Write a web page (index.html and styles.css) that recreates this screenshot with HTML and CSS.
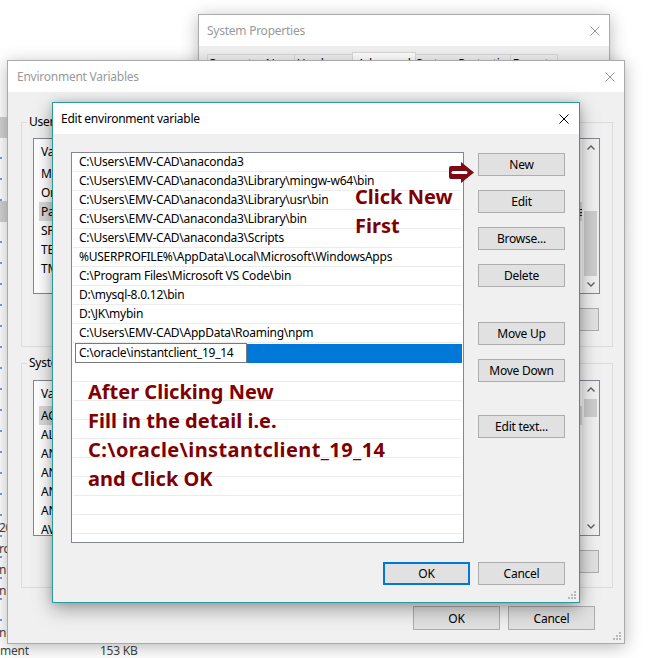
FILE: index.html
```html
<!DOCTYPE html>
<html>
<head>
<meta charset="utf-8">
<link rel="stylesheet" href="styles.css">
</head>
<body>
<div class="desk">

  <div class="explorer">
    <div class="ex-main">
      <div class="ex-pane">
        <div class="ex-sel s1"></div>
        <div class="ex-sel s2"></div>
        <div class="ex-frags">
          <div>20</div><div>rc</div><div>n</div><div>n</div><div></div><div>n</div>
        </div>
      </div>
    </div>
    <div class="ex-status"><span class="st-name">ment</span><span class="st-size">153 KB</span></div>
  </div>

  <div class="win inactive sysprops">
    <div class="titlebar">
      <span class="title">System Properties</span>
      <svg class="close" width="10" height="10" viewBox="0 0 10 10"><path d="M0.5 0.5L9.5 9.5M9.5 0.5L0.5 9.5"/></svg>
    </div>
    <div class="body sp-body">
      <div class="tabs">
        <div class="tab t1">Computer Name</div>
        <div class="tab t2">Hardware</div>
        <div class="tab t3 active">Advanced</div>
        <div class="tab t4">System Protection</div>
        <div class="tab t5">Remote</div>
      </div>
    </div>
  </div>

  <div class="win inactive envvars">
    <div class="titlebar ev-title">
      <span class="title">Environment Variables</span>
      <svg class="close" width="10" height="10" viewBox="0 0 10 10"><path d="M0.5 0.5L9.5 9.5M9.5 0.5L0.5 9.5"/></svg>
    </div>
    <div class="body ev-body">
      <div class="group user">
        <span class="legend">User variables for EMV-CAD</span>
        <div class="lv">
          <div class="lv-content">
            <div class="lv-header"><span class="c1">Variable</span><span class="c2">Value</span></div>
            <div class="lv-row"><span class="c1">MOZ_PLUGIN_PATH</span><span class="c2">C:\Program Files (x86)\Foxit Software\plugins\</span></div>
            <div class="lv-row"><span class="c1">OneDrive</span><span class="c2">C:\Users\EMV-CAD\OneDrive</span></div>
            <div class="lv-row sel"><span class="c1">Path</span><span class="c2">C:\Users\EMV-CAD\anaconda3;C:\Users\EMV-CAD\anaconda3\Library</span></div>
            <div class="lv-row"><span class="c1">SPARK_HOME</span><span class="c2">D:\spark</span></div>
            <div class="lv-row"><span class="c1">TEMP</span><span class="c2">%USERPROFILE%\AppData\Local\Temp</span></div>
            <div class="lv-row"><span class="c1">TMP</span><span class="c2">%USERPROFILE%\AppData\Local\Temp</span></div>
          </div>
          <div class="vscroll">
            <div class="sb-arrow"><svg width="8" height="5" viewBox="0 0 8 5"><path d="M0.5 4.5L4 1L7.5 4.5"/></svg></div>
            <div class="track"><div class="thumb"></div></div>
            <div class="sb-arrow"><svg width="8" height="5" viewBox="0 0 8 5"><path d="M0.5 0.5L4 4L7.5 0.5"/></svg></div>
          </div>
        </div>
        <div class="btnrow">
          <button class="btn">New...</button><button class="btn">Edit...</button><button class="btn">Delete</button>
        </div>
      </div>

      <div class="group sys">
        <span class="legend">System variables</span>
        <div class="lv">
          <div class="lv-content">
            <div class="lv-header"><span class="c1">Variable</span><span class="c2">Value</span></div>
            <div class="lv-row sel"><span class="c1">ACSetupSvcPort</span><span class="c2">23210</span></div>
            <div class="lv-row"><span class="c1">ALLUSERSPROFILE</span><span class="c2">C:\ProgramData</span></div>
            <div class="lv-row"><span class="c1">ANDROID_HOME</span><span class="c2">C:\Android\sdk</span></div>
            <div class="lv-row"><span class="c1">ANDROID_NDK</span><span class="c2">C:\Android\ndk</span></div>
            <div class="lv-row"><span class="c1">ANT_HOME</span><span class="c2">D:\ant</span></div>
            <div class="lv-row"><span class="c1">ANT_OPTS</span><span class="c2">-Xmx512m</span></div>
            <div class="lv-row"><span class="c1">AVR32_HOME</span><span class="c2">C:\avr32</span></div>
          </div>
          <div class="vscroll">
            <div class="sb-arrow"><svg width="8" height="5" viewBox="0 0 8 5"><path d="M0.5 4.5L4 1L7.5 4.5"/></svg></div>
            <div class="track"><div class="thumb"></div></div>
            <div class="sb-arrow"><svg width="8" height="5" viewBox="0 0 8 5"><path d="M0.5 0.5L4 4L7.5 0.5"/></svg></div>
          </div>
        </div>
        <div class="btnrow">
          <button class="btn">New...</button><button class="btn">Edit...</button><button class="btn">Delete</button>
        </div>
      </div>

      <div class="ev-footer">
        <button class="btn">OK</button><button class="btn">Cancel</button>
      </div>
      <svg class="grip" width="9" height="9" viewBox="0 0 9 9"><rect x="7" y="1" width="2" height="2"/><rect x="4" y="4" width="2" height="2"/><rect x="7" y="4" width="2" height="2"/><rect x="1" y="7" width="2" height="2"/><rect x="4" y="7" width="2" height="2"/><rect x="7" y="7" width="2" height="2"/></svg>
    </div>
  </div>

  <div class="win editdlg">
    <div class="titlebar ed-title">
      <span class="title">Edit environment variable</span>
      <svg class="close" width="10" height="10" viewBox="0 0 10 10"><path d="M0.5 0.5L9.5 9.5M9.5 0.5L0.5 9.5"/></svg>
    </div>
    <div class="body ed-body">
      <div class="ed-main">
        <div class="ed-list">
          <div class="ed-row">C:\Users\EMV-CAD\anaconda3</div>
          <div class="ed-row">C:\Users\EMV-CAD\anaconda3\Library\mingw-w64\bin</div>
          <div class="ed-row">C:\Users\EMV-CAD\anaconda3\Library\usr\bin</div>
          <div class="ed-row">C:\Users\EMV-CAD\anaconda3\Library\bin</div>
          <div class="ed-row">C:\Users\EMV-CAD\anaconda3\Scripts</div>
          <div class="ed-row">%USERPROFILE%\AppData\Local\Microsoft\WindowsApps</div>
          <div class="ed-row">C:\Program Files\Microsoft VS Code\bin</div>
          <div class="ed-row">D:\mysql-8.0.12\bin</div>
          <div class="ed-row">D:\JK\mybin</div>
          <div class="ed-row">C:\Users\EMV-CAD\AppData\Roaming\npm</div>
          <div class="ed-row editing"><div class="ed-edit">C:\oracle\instantclient_19_14</div><div class="ed-fill"></div></div>
          <div class="ed-row"></div>
          <div class="ed-row"></div>
          <div class="ed-row"></div>
          <div class="ed-row"></div>
          <div class="ed-row"></div>
          <div class="ed-row"></div>
          <div class="ed-row"></div>
          <div class="ed-row"></div>
          <div class="ed-row"></div>

          <svg class="ann-arrow" width="26" height="21" viewBox="0 0 26 21">
            <path class="ar-fill" d="M2 4H12V0L25 10.5L12 21V17H2Q0 17 0 15V6Q0 4 2 4Z"/>
            <path class="ar-line" d="M4 10.5H17"/>
          </svg>
          <div class="ann ann-1">Click New<br>First</div>
          <div class="ann ann-2">After Clicking New<br>Fill in the detail i.e.<br><span class="wide">C:\oracle\instantclient_19_14</span><br>and Click OK</div>
        </div>
        <div class="ed-btns">
          <button class="btn">New</button>
          <button class="btn">Edit</button>
          <button class="btn">Browse...</button>
          <button class="btn">Delete</button>
          <button class="btn gap1">Move Up</button>
          <button class="btn">Move Down</button>
          <button class="btn gap2">Edit text...</button>
        </div>
      </div>
      <div class="ed-footer">
        <button class="btn default">OK</button><button class="btn">Cancel</button>
      </div>
      <svg class="grip" width="9" height="9" viewBox="0 0 9 9"><rect x="7" y="1" width="2" height="2"/><rect x="4" y="4" width="2" height="2"/><rect x="7" y="4" width="2" height="2"/><rect x="1" y="7" width="2" height="2"/><rect x="4" y="7" width="2" height="2"/><rect x="7" y="7" width="2" height="2"/></svg>
    </div>
  </div>

</div>
</body>
</html>
```
FILE: styles.css
```css
* { box-sizing: border-box; }
html, body { margin: 0; padding: 0; }
body {
  width: 659px; height: 658px; overflow: hidden; background: #fff;
  font-family: "Noto Sans", "DejaVu Sans", sans-serif; font-size: 12px; color: #000;
  letter-spacing: -0.25px;
}
.desk { position: relative; width: 659px; height: 658px; overflow: hidden; }

/* explorer behind */
.explorer { position: absolute; left: 0; top: 0; width: 659px; height: 658px; display: flex; flex-direction: column; }
.ex-main { flex: 1; }
.ex-pane {
  width: 7px; height: 100%;
  background: repeating-linear-gradient(to bottom, transparent 0, transparent 19px, #7d9bd3 19px, #7d9bd3 21px) 0 0 / 2px 515px no-repeat;
}
.ex-sel { height: 21px; width: 7px; background: #d2d2d2; }
.ex-sel.s1 { margin-top: 117px; }
.ex-sel.s2 { margin-top: 63px; }
.ex-frags { margin-top: 295px; color: #444; white-space: nowrap; margin-left: -1px; }
.ex-frags div { height: 21px; line-height: 21px; }
.ex-status { height: 15px; display: flex; line-height: 15px; color: #444; white-space: nowrap; }
.st-name { width: 100px; }

/* windows */
.win { position: absolute; display: flex; flex-direction: column; background: #f0f0f0; }
.inactive { border: 1px solid #aaaaaa; box-shadow: 0 3px 16px rgba(0,0,0,0.28); }
.titlebar {
  height: 31px; flex: none; background: #fff; display: flex; align-items: center;
  justify-content: space-between; padding: 0 9px 0 8px;
}
.inactive .title { color: #999; }
.inactive .close path { stroke: #999; }
.close path { stroke: #000; stroke-width: 1; fill: none; }
.body { flex: 1; position: relative; }

.sysprops { left: 198px; top: 14px; width: 412px; height: 220px; }
.sp-body { padding: 6px 0 0 8px; }
.tabs { display: flex; align-items: flex-start; }
.tab {
  height: 24px; margin-top: 2px; margin-right: -1px; border: 1px solid #d9d9d9; border-bottom: none;
  background: #f0f0f0; text-align: center; line-height: 12px; padding-top: 3px; white-space: nowrap; overflow: hidden;
}
.tab.active { margin-top: 0; height: 28px; background: #fff; padding-top: 5px; }
.t1 { width: 88px; } .t2 { width: 59px; } .t3 { width: 64px; } .t4 { width: 96px; } .t5 { width: 48px; }

.envvars { left: 7px; top: 60px; width: 618px; height: 584px; }
.ev-title { padding-left: 9px; }
.ev-body { padding: 30px 11px 0 13px; display: flex; flex-direction: column; }
.group {
  position: relative; border: 1px solid #dcdcdc; height: 225px; flex: none;
  padding: 15px 12px 0 11px; display: flex; flex-direction: column;
}
.group.sys { margin-top: 16px; padding-top: 16px; }
.legend { position: absolute; top: -9px; left: 5px; padding: 0 2px; background: #f0f0f0; line-height: 16px; white-space: nowrap; }
.lv { height: 156px; flex: none; border: 1px solid #828790; background: #fff; display: flex; }
.lv-content { flex: 1; overflow: hidden; }
.lv-header { height: 25px; display: flex; align-items: center; padding-left: 7px; white-space: nowrap; }
.lv-row { height: 19px; display: flex; align-items: center; margin-left: 5px; padding-left: 2px; white-space: nowrap; }
.lv-row.sel { background: #d9d9d9; }
.c1 { width: 180px; flex: none; }
.vscroll { width: 17px; flex: none; background: #f0f0f0; display: flex; flex-direction: column; }
.sb-arrow { height: 17px; flex: none; display: flex; align-items: center; justify-content: center; }
.sb-arrow path { stroke: #606060; stroke-width: 1.4; fill: none; }
.track { flex: 1; display: flex; flex-direction: column; padding: 0 2px; }
.thumb { background: #cdcdcd; }
.user .thumb { margin-top: 55px; height: 65px; }
.sys .thumb { margin-top: 1px; height: 18px; }
.btnrow { display: flex; justify-content: flex-end; gap: 9px; margin-top: 14px; padding-right: 1px; }
.btnrow .btn { width: 75px; }
.ev-footer { display: flex; justify-content: flex-end; gap: 8px; margin-top: 18px; padding-right: 18px; }
.ev-footer .btn { width: 87px; height: 24px; }

.btn {
  height: 23px; width: 87px; padding: 0; margin: 0; border: 1px solid #adadad; background: #e1e1e1;
  font-family: "Noto Sans", "DejaVu Sans", sans-serif; font-size: 12px; color: #000; flex: none;
  letter-spacing: -0.25px;
  display: flex; align-items: center; justify-content: center; white-space: nowrap;
}
.btn.default { border: 2px solid #0078d7; }

.grip { position: absolute; right: 3px; bottom: 3px; }
.grip rect { fill: #b9b9b9; }

/* edit dialog */
.editdlg {
  left: 52px; top: 102px; width: 528px; height: 501px; border: 1px solid #2a9a9c;
  box-shadow: 0 6px 18px rgba(0,0,0,0.35), 0 0 8px rgba(0,0,0,0.12);
}
.ed-title { padding-right: 10px; }
.ed-body { padding: 18px 14px 0 18px; display: flex; flex-direction: column; }
.ed-main { display: flex; gap: 14px; }
.ed-list { position: relative; width: 393px; height: 391px; flex: none; border: 1px solid #828790; background: #fff; }
.ed-row {
  height: 19px; border-bottom: 1px solid #ececec; margin: 0 1px; padding-left: 6px;
  line-height: 18px; white-space: nowrap;
}
.ed-row.editing { height: 20px; border-bottom: none; display: flex; padding-left: 2px; }
.ed-edit { width: 172px; height: 20px; border: 1px solid #7a7a7a; background: #fff; padding-left: 3px; line-height: 18px; }
.ed-fill { flex: 1; background: #0078d7; margin-top: 1px; height: 19px; }
.ed-btns { display: flex; flex-direction: column; gap: 14px; padding-top: 1px; }
.ed-btns .gap1 { margin-top: 21px; }
.ed-btns .gap2 { margin-top: 19px; }
.ed-footer { display: flex; justify-content: flex-end; gap: 8px; margin-top: 19px; }

/* annotations */
.ann {
  position: absolute; color: #800000; font-family: "Noto Sans", "DejaVu Sans", sans-serif;
  font-weight: 700; font-size: 20px; line-height: 29px; white-space: nowrap; letter-spacing: 0;
}
.ann .wide { letter-spacing: 0.4px; }
.ann-1 { left: 283px; top: 29px; }
.ann-2 { left: 16px; top: 224px; }
.ann-arrow { position: absolute; left: 377px; top: 9px; }
.ar-fill { fill: #7e0a16; }
.ar-line { stroke: #fff; stroke-width: 3; stroke-linecap: round; fill: none; }
```
